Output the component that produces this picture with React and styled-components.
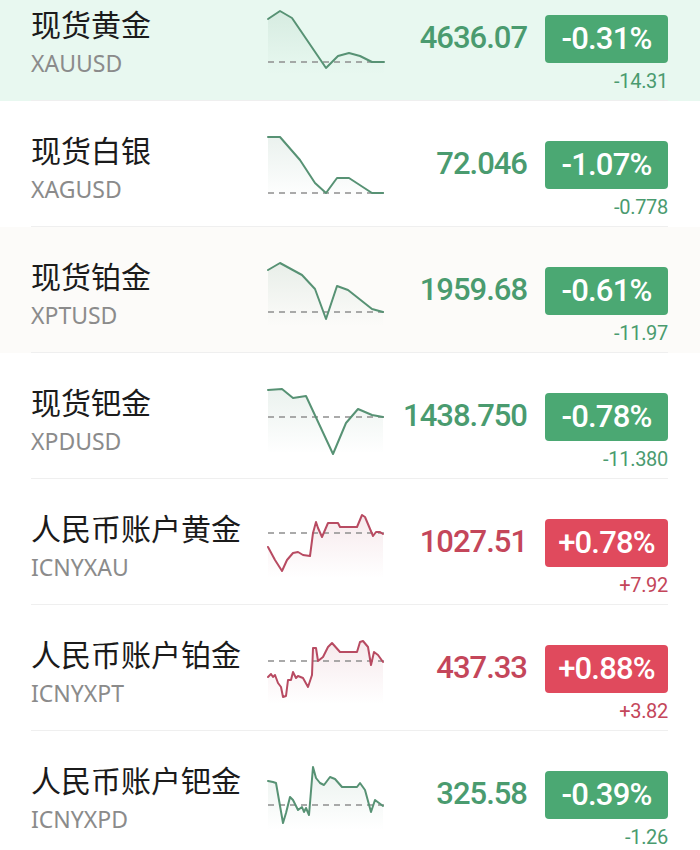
import React from "react";
import styled, { createGlobalStyle } from "styled-components";

const GlobalStyle = createGlobalStyle`
    body {
        margin: 0;
        background: #ffffff;
        overflow: hidden;
    }
`;

const GREEN = {
    text: "#4a9b6f",
    badge: "#4ba873",
    line: "#579274",
};

const RED = {
    text: "#c4465a",
    badge: "#e04a5d",
    line: "#b84b62",
};

const rows = [
    {
        name: "现货黄金", code: "XAUUSD", price: "4636.07", pct: "-0.31%", change: "-14.31",
        up: false, bg: "#e8f8f0", base: 52,
        points: [[0, 9], [12, 1], [24, 8], [58, 58], [70, 46], [81, 43], [92, 46], [104, 52], [116, 52]],
    },
    {
        name: "现货白银", code: "XAGUSD", price: "72.046", pct: "-1.07%", change: "-0.778",
        up: false, bg: "#ffffff", base: 57,
        points: [[0, 1], [12, 1], [32, 24], [47, 47], [58, 57], [69, 42], [81, 42], [104, 57], [115, 57]],
    },
    {
        name: "现货铂金", code: "XPTUSD", price: "1959.68", pct: "-0.61%", change: "-11.97",
        up: false, bg: "#fcfbf9", base: 50,
        points: [[0, 8], [12, 1], [34, 13], [47, 27], [58, 57], [69, 24], [80, 28], [104, 47], [115, 50]],
    },
    {
        name: "现货钯金", code: "XPDUSD", price: "1438.750", pct: "-0.78%", change: "-11.380",
        up: false, bg: "#ffffff", base: 29,
        points: [[0, 2], [14, 1], [25, 10], [38, 8], [65, 66], [78, 35], [90, 21], [104, 27], [115, 29]],
    },
    {
        name: "人民币账户黄金", code: "ICNYXAU", price: "1027.51", pct: "+0.78%", change: "+7.92",
        up: true, bg: "#ffffff", base: 19,
        points: [[0, 33], [7, 46], [14, 57], [19, 46], [25, 39], [30, 38], [35, 41], [42, 42], [45, 19], [48, 8], [50, 14], [54, 23], [60, 9], [70, 9], [72, 13], [89, 13], [94, 1], [97, 3], [105, 22], [108, 18], [112, 18], [115, 20]],
    },
    {
        name: "人民币账户铂金", code: "ICNYXPT", price: "437.33", pct: "+0.88%", change: "+3.82",
        up: true, bg: "#ffffff", base: 21,
        points: [[0, 37], [3, 34], [5, 37], [7, 35], [10, 43], [13, 47], [15, 57], [18, 56], [20, 40], [23, 40], [25, 32], [28, 38], [30, 36], [35, 38], [40, 47], [44, 35], [45, 8], [48, 8], [50, 21], [55, 17], [60, 7], [64, 3], [72, 12], [89, 12], [92, 2], [95, 1], [100, 7], [103, 25], [106, 12], [110, 15], [115, 22]],
    },
    {
        name: "人民币账户钯金", code: "ICNYXPD", price: "325.58", pct: "-0.39%", change: "-1.26",
        up: false, bg: "#ffffff", base: 39,
        points: [[0, 15], [5, 16], [8, 17], [15, 57], [18, 47], [22, 31], [25, 34], [30, 44], [34, 41], [36, 46], [38, 42], [41, 49], [45, 1], [48, 12], [52, 17], [56, 19], [62, 11], [67, 13], [74, 21], [89, 21], [92, 17], [97, 24], [103, 46], [107, 34], [111, 37], [115, 40]],
    },
];

const List = styled.div`
    margin-top: -25px;
`;

const Row = styled.div`
    background: ${(p) => p.$bg};
`;

const RowInner = styled.div`
    margin: 0 32px 0 31px;
    height: 125px;
    border-bottom: 1px solid #efefef;
    display: grid;
    grid-template-columns: 237px 118px 1fr 123px;
    align-items: start;
`;

const NameBlock = styled.div`
    padding-top: 30px;
`;

const Name = styled.div`
    font-family: "Noto Sans CJK SC", "Noto Sans", sans-serif;
    font-size: 30px;
    line-height: 36px;
    color: #1b1b1b;
`;

const Code = styled.div`
    margin-top: 8px;
    font-family: "Noto Sans", "Liberation Sans", sans-serif;
    font-size: 23px;
    line-height: 28px;
    color: #8b8b8b;
`;

const ChartSvg = styled.svg`
    margin-top: 35px;
    overflow: visible;
    display: block;
`;

const Price = styled.div`
    padding-top: 45px;
    padding-right: 18px;
    text-align: right;
    font-family: Roboto, "Liberation Sans", sans-serif;
    font-weight: 500;
    font-size: 31px;
    line-height: 36px;
    letter-spacing: -1px;
    color: ${(p) => p.$color};
`;

const RightCol = styled.div`
    display: flex;
    flex-direction: column;
    align-items: flex-end;
`;

const Badge = styled.div`
    margin-top: 40px;
    width: 123px;
    height: 48px;
    border-radius: 4px;
    background: ${(p) => p.$color};
    color: #ffffff;
    text-align: center;
    font-family: Roboto, "Liberation Sans", sans-serif;
    font-weight: 500;
    font-size: 31px;
    line-height: 48px;
    letter-spacing: -0.8px;
`;

const Change = styled.div`
    margin-top: 6px;
    font-family: Roboto, "Liberation Sans", sans-serif;
    font-weight: 400;
    font-size: 20px;
    line-height: 24px;
    letter-spacing: -0.3px;
    color: ${(p) => p.$color};
`;

function Sparkline({ id, points, base, color }) {
    const line = points.map(([x, y]) => `${x},${y}`).join(" ");
    const last = points[points.length - 1];
    const area = `0,64 ${line} ${last[0]},64`;
    return (
        <ChartSvg width="118" height="60" viewBox="0 0 118 60">
            <defs>
                <linearGradient id={id} x1="0" y1="0" x2="0" y2="1">
                    <stop offset="0" stopColor={color} stopOpacity="0.12" />
                    <stop offset="1" stopColor={color} stopOpacity="0" />
                </linearGradient>
            </defs>
            <polygon points={area} fill={`url(#${id})`} />
            <line x1="0" y1={base} x2="116" y2={base} stroke="#8e8e8e" strokeWidth="1.3" strokeDasharray="6 5" />
            <polyline points={line} fill="none" stroke={color} strokeWidth="2" strokeLinejoin="round" strokeLinecap="round" />
        </ChartSvg>
    );
}

export default function App() {
    return (
        <>
            <GlobalStyle />
            <List>
                {rows.map((r, i) => {
                    const c = r.up ? RED : GREEN;
                    return (
                        <Row key={r.code} $bg={r.bg}>
                            <RowInner>
                                <NameBlock>
                                    <Name>{r.name}</Name>
                                    <Code>{r.code}</Code>
                                </NameBlock>
                                <Sparkline id={`g${i}`} points={r.points} base={r.base} color={c.line} />
                                <Price $color={c.text}>{r.price}</Price>
                                <RightCol>
                                    <Badge $color={c.badge}>{r.pct}</Badge>
                                    <Change $color={c.text}>{r.change}</Change>
                                </RightCol>
                            </RowInner>
                        </Row>
                    );
                })}
            </List>
        </>
    );
}
